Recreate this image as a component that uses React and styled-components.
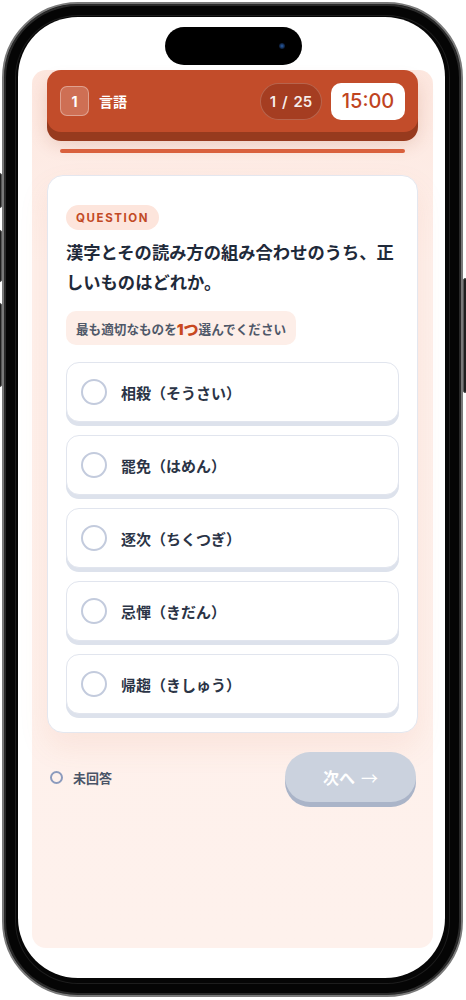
import styled, { createGlobalStyle } from "styled-components";

const GlobalStyle = createGlobalStyle`
  html, body {
    margin: 0;
    padding: 0;
    background: #ffffff;
  }
  * {
    box-sizing: border-box;
  }
  body {
    font-family: "Inter", "Noto Sans CJK JP", sans-serif;
  }
`;

const Phone = styled.div`
  position: relative;
  width: 461px;
  height: 995px;
  margin: 2px 0 0 2px;
  padding: 13px 16px 17px 14px;
  border-radius: 76px;
  border: 2px solid #7a7a7a;
  background: #060606;
  box-shadow: inset 0 0 0 2px #2a2a2a, inset 0 0 0 11px #050505,
    inset 0 0 0 12px #1d1d1d;
`;

const SideKey = styled.span`
  position: absolute;
  top: ${(p) => p.$top}px;
  height: ${(p) => p.$h}px;
  width: 4px;
  ${(p) => (p.$right ? "right: -6px;" : "left: -6px;")}
  background: #1f1f1f;
  border: 1px solid #555;
  border-radius: 2px;
`;

const Screen = styled.div`
  position: relative;
  height: 100%;
  padding: 53px 12px 30px 14px;
  border-radius: 60px;
  background: #ffffff;
  overflow: hidden;
`;

const Island = styled.div`
  position: absolute;
  top: 10px;
  left: 147px;
  width: 137px;
  height: 38px;
  border-radius: 19px;
  background: #000;

  &::after {
    content: "";
    position: absolute;
    right: 17px;
    top: 16px;
    width: 6px;
    height: 6px;
    border-radius: 50%;
    background: radial-gradient(circle, #2a5fa8 0%, #0b1a33 70%);
  }
`;

const Page = styled.div`
  display: flex;
  flex-direction: column;
  height: 100%;
  padding: 0 15px;
  border-radius: 14px;
  background: linear-gradient(180deg, #fde7df 0%, #fef0eb 22%, #fef1ec 100%);
`;

const Header = styled.header`
  display: flex;
  align-items: center;
  height: 62px;
  padding: 0 13px;
  border-radius: 14px;
  background: #c24c2a;
  box-shadow: 0 9px 0 #973a1e, 0 12px 18px rgba(150, 60, 30, 0.18);
  color: #fff;
`;

const SectionNo = styled.div`
  display: flex;
  align-items: center;
  justify-content: center;
  width: 29px;
  height: 30px;
  border-radius: 7px;
  background: rgba(255, 255, 255, 0.2);
  border: 1px solid rgba(255, 255, 255, 0.35);
  font-size: 14px;
  font-weight: 700;
`;

const SectionName = styled.span`
  margin-left: 10px;
  font-size: 14px;
  font-weight: 700;
  flex: 1;
`;

const Counter = styled.div`
  display: flex;
  align-items: center;
  justify-content: center;
  width: 62px;
  height: 37px;
  border-radius: 19px;
  background: rgba(90, 25, 10, 0.28);
  border: 1px solid rgba(255, 255, 255, 0.2);
  color: rgba(255, 255, 255, 0.92);
  font-size: 15px;
  font-weight: 600;
  word-spacing: 2px;
`;

const Timer = styled.div`
  display: flex;
  align-items: center;
  justify-content: center;
  width: 74px;
  height: 37px;
  margin-left: 9px;
  border-radius: 10px;
  background: #fff;
  color: #c0441f;
  font-size: 20px;
  font-weight: 500;
`;

const Progress = styled.div`
  height: 4px;
  margin: 17px 13px 0;
  border-radius: 2px;
  background: #d9603d;
`;

const Card = styled.section`
  margin-top: 22px;
  padding: 29px 18px 18px;
  border-radius: 16px;
  background: #fff;
  border: 1px solid #e4e7ef;
  box-shadow: 0 14px 30px rgba(214, 120, 80, 0.1);
`;

const Tag = styled.span`
  display: inline-flex;
  align-items: center;
  height: 25px;
  padding: 0 10px;
  border-radius: 13px;
  background: #fde5dc;
  color: #c24a25;
  font-size: 11.5px;
  font-weight: 700;
  letter-spacing: 1.6px;
`;

const Question = styled.h2`
  margin: 8px 0 0;
  font-size: 17.3px;
  line-height: 30px;
  font-weight: 700;
  color: #1f2a3a;
`;

const Hint = styled.div`
  display: inline-flex;
  align-items: center;
  height: 34px;
  margin-top: 13px;
  padding: 0 10px;
  border-radius: 10px;
  background: #fdeee8;
  color: #4f5868;
  font-size: 12.6px;
  font-weight: 700;

  b {
    color: #c8481f;
    font-size: 15px;
  }
`;

const Options = styled.div`
  display: flex;
  flex-direction: column;
  gap: 13px;
  margin-top: 17px;
`;

const Option = styled.button`
  display: flex;
  align-items: center;
  gap: 14px;
  height: 60px;
  padding: 0 14px;
  border-radius: 13px;
  border: 1px solid #e1e5ee;
  background: #fff;
  box-shadow: 0 4px 0 #dde2ec;
  font-family: inherit;
  font-size: 15px;
  font-weight: 700;
  color: #2b3446;
  text-align: left;
`;

const Radio = styled.span`
  width: 26px;
  height: 26px;
  border-radius: 50%;
  border: 2px solid #c3cbdd;
  flex-shrink: 0;
`;

const Footer = styled.div`
  display: flex;
  align-items: center;
  justify-content: space-between;
  margin-top: 19px;
  padding: 0 2px 0 3px;
`;

const Status = styled.div`
  display: flex;
  align-items: center;
  gap: 10px;
  font-size: 13px;
  font-weight: 700;
  color: #4a5467;
`;

const Dot = styled.span`
  width: 13px;
  height: 13px;
  border-radius: 50%;
  border: 2.5px solid #8c9bbd;
`;

const NextButton = styled.button`
  display: flex;
  align-items: center;
  justify-content: center;
  gap: 6px;
  width: 131px;
  height: 50px;
  border: none;
  border-radius: 25px;
  background: #cbd2de;
  box-shadow: 0 5px 0 #aab4c8;
  color: #fff;
  font-family: inherit;
  font-size: 16px;
  font-weight: 700;
`;

const Arrow = styled.span`
  font-family: "Noto Sans CJK JP", sans-serif;
  font-weight: 400;
  font-size: 17px;
`;

const choices = [
  "相殺（そうさい）",
  "罷免（はめん）",
  "逐次（ちくつぎ）",
  "忌憚（きだん）",
  "帰趨（きしゅう）",
];

const App = () => {
  return (
    <>
      <GlobalStyle />
      <Phone>
        <SideKey $top={169} $h={35} />
        <SideKey $top={226} $h={52} />
        <SideKey $top={299} $h={84} />
        <SideKey $right $top={274} $h={115} />
        <Screen>
          <Island />
          <Page>
            <Header>
              <SectionNo>1</SectionNo>
              <SectionName>言語</SectionName>
              <Counter>1 / 25</Counter>
              <Timer>15:00</Timer>
            </Header>
            <Progress />
            <Card>
              <Tag>QUESTION</Tag>
              <Question>
                漢字とその読み方の組み合わせのうち、正しいものはどれか。
              </Question>
              <Hint>
                最も適切なものを<b>1つ</b>選んでください
              </Hint>
              <Options>
                {choices.map((c) => (
                  <Option key={c}>
                    <Radio />
                    {c}
                  </Option>
                ))}
              </Options>
            </Card>
            <Footer>
              <Status>
                <Dot />
                未回答
              </Status>
              <NextButton disabled>
                次へ<Arrow>→</Arrow>
              </NextButton>
            </Footer>
          </Page>
        </Screen>
      </Phone>
    </>
  );
};

export default App;
